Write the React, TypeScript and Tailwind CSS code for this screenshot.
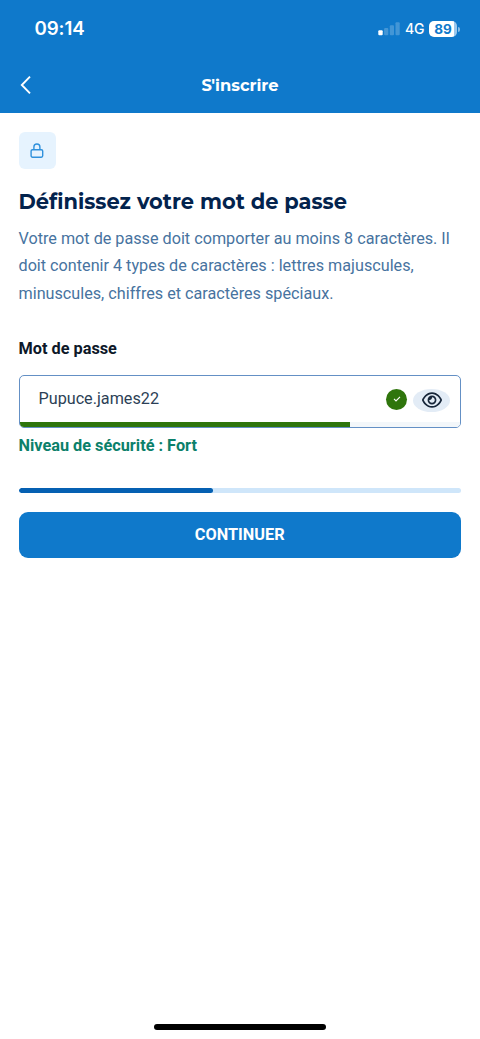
import React, { useState } from 'react';
import { FaRegEye } from 'react-icons/fa6';

const STRENGTH = 75;
const STEP_PROGRESS = 44;

function StatusBar() {
  return (
    <div className="flex h-[58px] items-center justify-between pl-[34.5px] pr-5 font-['Inter',sans-serif] text-white">
      <span className="text-[18.7px] leading-6 font-semibold tracking-[-0.1px]">09:14</span>
      <div className="flex items-center">
        <svg width="22" height="14" viewBox="0 0 22 14" fill="#fff">
          <rect x="0.3" y="8.2" width="4.4" height="5" rx="1" />
          <rect x="6.1" y="6" width="4.2" height="7.2" rx="1" opacity="0.22" />
          <rect x="11.8" y="3.2" width="4.2" height="10" rx="1" opacity="0.22" />
          <rect x="17.5" y="0.2" width="4.2" height="13" rx="1" opacity="0.22" />
        </svg>
        <span className="ml-[5px] w-[19px] text-[14px] leading-5 font-medium tracking-[-0.3px]">4G</span>
        <div className="ml-[5px] flex items-center">
          <div className="flex h-4 w-7 items-center justify-center rounded-[5px] bg-linear-to-r from-white from-90% to-[#9cc8ec] to-90% text-[13.5px] leading-4 font-bold text-[#0f79cb]">
            89
          </div>
          <div className="ml-px h-[5px] w-0.5 rounded-r-full bg-white/50" />
        </div>
      </div>
    </div>
  );
}

function LockIcon() {
  return (
    <svg width="14" height="16" viewBox="0 0 14 16" fill="none" stroke="#3091dc" strokeWidth="1.4">
      <rect x="1.1" y="6.7" width="11.6" height="7.5" rx="1.4" />
      <path d="M3.9 6.7V4a3 3 0 0 1 6 0v2.7" />
    </svg>
  );
}

export default function App() {
  const [password, setPassword] = useState('Pupuce.james22');
  const [visible, setVisible] = useState(true);

  return (
    <div className="flex min-h-screen w-full flex-col bg-white font-['Roboto',sans-serif]">
      <header className="h-[113px] bg-[#0f79cb] font-['Montserrat',sans-serif]">
        <StatusBar />
        <div className="grid h-[53px] grid-cols-[40px_1fr_40px] items-center text-white">
          <button className="pl-5" aria-label="Retour">
            <svg width="12" height="20" viewBox="0 0 12 20" fill="none" stroke="#fff" strokeWidth="1.9">
              <path d="M10 1.7 1.8 10l8.2 8.3" />
            </svg>
          </button>
          <h1 className="text-center text-[16.3px] leading-6 font-bold">S'inscrire</h1>
        </div>
      </header>

      <main className="pt-[19px] pr-[19px] pl-[18.5px]">
        <div className="flex size-[37px] items-center justify-center rounded-md bg-[#e6f3fe]">
          <LockIcon />
        </div>

        <h2 className="mt-[18.5px] font-['Montserrat',sans-serif] text-[20.95px] leading-7 font-bold whitespace-nowrap text-[#03234d]">
          Définissez votre mot de passe
        </h2>
        <p className="mt-[9px] text-[16.2px] leading-[27.8px] whitespace-nowrap text-[#4773a0]">
          Votre mot de passe doit comporter au moins 8 caractères. Il
          <br />
          doit contenir 4 types de caractères : lettres majuscules,
          <br />
          minuscules, chiffres et caractères spéciaux.
        </p>

        <label htmlFor="password" className="mt-[29.5px] block text-[16.3px] leading-6 font-bold text-[#0d1829]">
          Mot de passe
        </label>
        <div className="mt-[14px] flex h-[53px] flex-col overflow-hidden rounded-[5px] border border-[#6490c5]">
          <div className="flex flex-1 items-center pr-2.5 pl-[19px]">
            <input
              id="password"
              type={visible ? 'text' : 'password'}
              value={password}
              onChange={(e) => setPassword(e.target.value)}
              className="min-w-0 flex-1 text-[16.2px] text-[#2c3f56] outline-none"
            />
            <div className="flex size-[21px] items-center justify-center rounded-full bg-[#2f750c]">
              <svg width="8" height="6" viewBox="0 0 8 6" fill="none" stroke="#fff" strokeWidth="1.1">
                <path d="m1 2.9 2 2L7 .9" />
              </svg>
            </div>
            <button
              aria-label="Afficher"
              onClick={() => setVisible(!visible)}
              className="mt-0.5 ml-1.5 flex h-[23px] w-[37px] items-center justify-center rounded-[50%] bg-[#e3ecf6] text-[#17263a]"
            >
              <FaRegEye className="h-[18px] w-5" />
            </button>
          </div>
          <div className="h-[5px] bg-[#f3f7fa]">
            <div className="h-full bg-[#2f750c]" style={{ width: `${STRENGTH}%` }} />
          </div>
        </div>
        <p className="mt-1.5 text-[16.3px] leading-6 font-bold text-[#0b806a]">Niveau de sécurité : Fort</p>

        <div className="mt-[30px] h-[5px] overflow-hidden rounded-full bg-[#cfe6fa]">
          <div className="h-full rounded-full bg-[#0560b2]" style={{ width: `${STEP_PROGRESS}%` }} />
        </div>
        <button className="mt-[18.5px] h-[46px] w-full rounded-[9px] bg-[#0f79cb] text-[16.3px] font-bold text-white">
          CONTINUER
        </button>
      </main>

      <footer className="mt-auto flex justify-center pb-[9.5px]">
        <div className="h-[6px] w-[172px] rounded-full bg-black" />
      </footer>
    </div>
  );
}
